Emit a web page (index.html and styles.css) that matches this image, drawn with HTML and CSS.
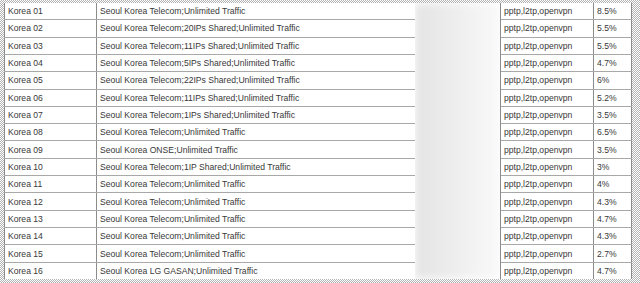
FILE: index.html
```html
<!DOCTYPE html>
<html>
<head>
<meta charset="utf-8">
<link rel="stylesheet" href="styles.css">
</head>
<body>
<div class="frame">
<table class="servers">
<colgroup>
<col class="c-name"><col class="c-isp"><col class="c-ip"><col class="c-proto"><col class="c-load">
</colgroup>
<tbody>
<tr><td>Korea 01</td><td class="isp">Seoul Korea Telecom;Unlimited Traffic</td><td class="ip" rowspan="16"><div class="blur"></div></td><td>pptp,l2tp,openvpn</td><td>8.5%</td></tr>
<tr><td>Korea 02</td><td class="isp">Seoul Korea Telecom;20IPs Shared;Unlimited Traffic</td><td>pptp,l2tp,openvpn</td><td>5.5%</td></tr>
<tr><td>Korea 03</td><td class="isp">Seoul Korea Telecom;11IPs Shared;Unlimited Traffic</td><td>pptp,l2tp,openvpn</td><td>5.5%</td></tr>
<tr><td>Korea 04</td><td class="isp">Seoul Korea Telecom;5IPs Shared;Unlimited Traffic</td><td>pptp,l2tp,openvpn</td><td>4.7%</td></tr>
<tr><td>Korea 05</td><td class="isp">Seoul Korea Telecom;22IPs Shared;Unlimited Traffic</td><td>pptp,l2tp,openvpn</td><td>6%</td></tr>
<tr><td>Korea 06</td><td class="isp">Seoul Korea Telecom;11IPs Shared;Unlimited Traffic</td><td>pptp,l2tp,openvpn</td><td>5.2%</td></tr>
<tr><td>Korea 07</td><td class="isp">Seoul Korea Telecom;1IPs Shared;Unlimited Traffic</td><td>pptp,l2tp,openvpn</td><td>3.5%</td></tr>
<tr><td>Korea 08</td><td class="isp">Seoul Korea Telecom;Unlimited Traffic</td><td>pptp,l2tp,openvpn</td><td>6.5%</td></tr>
<tr><td>Korea 09</td><td class="isp">Seoul Korea ONSE;Unlimited Traffic</td><td>pptp,l2tp,openvpn</td><td>3.5%</td></tr>
<tr><td>Korea 10</td><td class="isp">Seoul Korea Telecom;1IP Shared;Unlimited Traffic</td><td>pptp,l2tp,openvpn</td><td>3%</td></tr>
<tr><td>Korea 11</td><td class="isp">Seoul Korea Telecom;Unlimited Traffic</td><td>pptp,l2tp,openvpn</td><td>4%</td></tr>
<tr><td>Korea 12</td><td class="isp">Seoul Korea Telecom;Unlimited Traffic</td><td>pptp,l2tp,openvpn</td><td>4.3%</td></tr>
<tr><td>Korea 13</td><td class="isp">Seoul Korea Telecom;Unlimited Traffic</td><td>pptp,l2tp,openvpn</td><td>4.7%</td></tr>
<tr><td>Korea 14</td><td class="isp">Seoul Korea Telecom;Unlimited Traffic</td><td>pptp,l2tp,openvpn</td><td>4.3%</td></tr>
<tr><td>Korea 15</td><td class="isp">Seoul Korea Telecom;Unlimited Traffic</td><td>pptp,l2tp,openvpn</td><td>2.7%</td></tr>
<tr><td>Korea 16</td><td class="isp">Seoul Korea LG GASAN;Unlimited Traffic</td><td>pptp,l2tp,openvpn</td><td>4.7%</td></tr>
</tbody>
</table>
</div>
</body>
</html>
```
FILE: styles.css
```css
html, body {
  margin: 0;
  padding: 0;
  background: #fff;
}
.frame {
  width: 640px;
  height: 283px;
  box-sizing: border-box;
  padding: 3px 9px 4px 4px;
  background: repeating-conic-gradient(#b4b4b4 0 25%, #ffffff 0 50%) 0 0 / 2px 2px;
  overflow: hidden;
}
.servers {
  width: 627px;
  height: 276px;
  border-collapse: collapse;
  table-layout: fixed;
  background: #fff;
  font-family: "Liberation Sans", Arial, sans-serif;
  font-size: 8.6px;
  color: #383838;
}
.c-name { width: 92px; }
.c-isp { width: 318px; }
.c-ip { width: 86px; }
.c-proto { width: 93px; }
.c-load { width: 38px; }
.servers td {
  border-bottom: 1px solid #a8a8a8;
  border-left: 1px solid #8c8c8c;
  border-right: 1px solid #8c8c8c;
  padding: 0 0 0 3px;
  white-space: nowrap;
  overflow: hidden;
  line-height: 16px;
}
.servers td.isp { border-right: 0; }
.servers tr:first-child td { border-top: 0; }
.servers tr:last-child td { border-bottom: 0; }
.servers td.ip {
  padding: 0;
  border-top: 0;
  border-bottom: 0;
  border-left: 0;
  background: #fff;
}
.blur {
  height: 276px;
  background: linear-gradient(90deg, #e4e4e4 0%, #ebebeb 35%, #f3f3f3 70%, #f9f9f9 100%);
  filter: blur(4px);
}
```
